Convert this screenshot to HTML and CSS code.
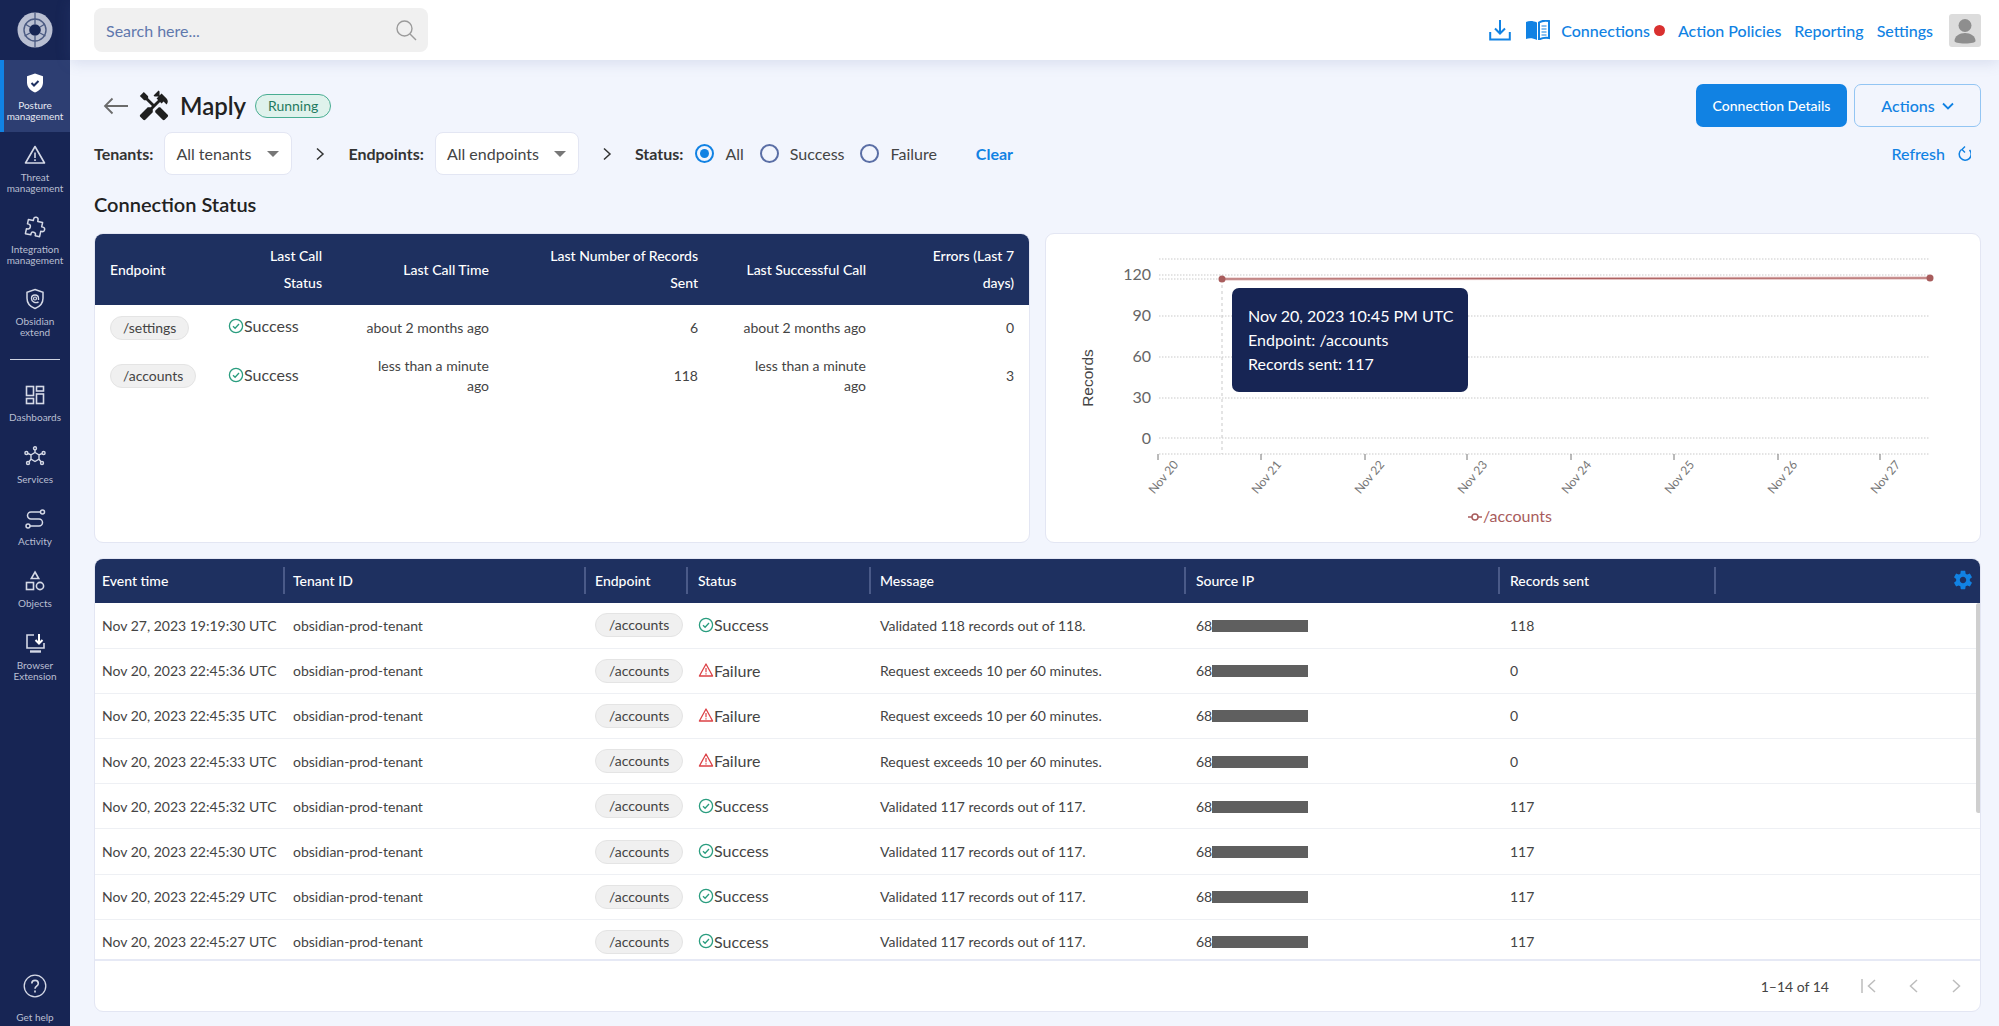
FILE: index.html
```html
<!DOCTYPE html>
<html lang="en">
<head>
<meta charset="utf-8">
<title>Maply - Connection Status</title>
<link rel="stylesheet" href="styles.css">
</head>
<body>
<svg class="defs" width="0" height="0" aria-hidden="true">
  <symbol id="ok" viewBox="0 0 16 16"><circle cx="8" cy="8" r="6.6" fill="none" stroke="#2a9d7f" stroke-width="1.3"/><path d="M5 8.2l2.1 2.1L11 6" fill="none" stroke="#2a9d7f" stroke-width="1.3"/></symbol>
  <symbol id="bad" viewBox="0 0 16 16"><path d="M8 2L14.6 14H1.4z" fill="none" stroke="#dc4146" stroke-width="1.3" stroke-linejoin="round"/><path d="M8 6v4.2M8 11.2v1.2" stroke="#dc4146" stroke-width="1.2"/></symbol>
</svg>
<div class="app">
  <nav class="sidebar">
    <div class="logo">
      <svg width="36" height="36" viewBox="0 0 36 36"><circle cx="18" cy="18" r="17.5" fill="#b9bfd2"/><circle cx="18" cy="18" r="11" fill="none" stroke="#4b5a82" stroke-width="1.4"/><circle cx="18" cy="18" r="5.8" fill="#172554"/><path d="M18 .5V12M18 24v11.500M8 12l5 3M28 12l-5 3M7.500 24l5.500-3M28.500 24L23 21" stroke="#4b5a82" stroke-width="1.3"/></svg>
    </div>
    <a class="nav-item active">
      <svg class="nav-icon" viewBox="0 0 24 24"><path d="M12 2.500l8 2.800v6c0 5-3.300 8.500-8 10.200-4.700-1.700-8-5.200-8-10.200v-6z" fill="#fff"/><path d="M8.500 12l2.500 2.500 4.500-4.500" fill="none" stroke="#1e3060" stroke-width="2"/></svg>
      <span>Posture<br>management</span>
    </a>
    <a class="nav-item">
      <svg class="nav-icon" viewBox="0 0 24 24"><path d="M12 3.500L21.500 20h-19z" fill="none" stroke="#d5d9e6" stroke-width="1.600" stroke-linejoin="round"/><path d="M12 9.500v5.500M12 16.300v1.700" stroke="#d5d9e6" stroke-width="1.600"/></svg>
      <span>Threat<br>management</span>
    </a>
    <a class="nav-item">
      <svg class="nav-icon" viewBox="0 0 24 24"><path d="M9 4.500c0-3 4.500-3 4.500 0V6h5v4.500h1.200c3 0 3 4.500 0 4.500h-1.200v5.500h-4.500v-1.200c0-2.600-4.500-2.600-4.500 0v1.200H4v-5h1.300c2.800 0 2.800-5 0-5H4V6h5z" fill="none" stroke="#d5d9e6" stroke-width="1.500" stroke-linejoin="round" transform="rotate(12 12 12)"/></svg>
      <span>Integration<br>management</span>
    </a>
    <a class="nav-item">
      <svg class="nav-icon" viewBox="0 0 24 24"><path d="M12 2.500l8 2.800v6c0 5-3.300 8.500-8 10.200-4.700-1.700-8-5.200-8-10.200v-6z" fill="none" stroke="#d5d9e6" stroke-width="1.500"/><path d="M15.500 15c-3 1.500-7 .2-7-3.500 0-2.200 1.500-3.500 3.500-3.500s3.500 1.300 3.500 3.500v1.500" fill="none" stroke="#d5d9e6" stroke-width="1.400"/><circle cx="12" cy="11.500" r="1.500" fill="none" stroke="#d5d9e6" stroke-width="1.200"/></svg>
      <span>Obsidian<br>extend</span>
    </a>
    <div class="nav-divider"></div>
    <a class="nav-item single">
      <svg class="nav-icon" viewBox="0 0 24 24" fill="none" stroke="#d5d9e6" stroke-width="1.600"><rect x="3.500" y="3.500" width="7" height="9"/><rect x="13.500" y="3.500" width="7" height="4.500"/><rect x="3.500" y="15.500" width="7" height="5"/><rect x="13.500" y="11" width="7" height="9.500"/></svg>
      <span>Dashboards</span>
    </a>
    <a class="nav-item single">
      <svg class="nav-icon" viewBox="0 0 24 24" fill="none" stroke="#d5d9e6" stroke-width="1.400"><path d="M12 7.500l4 2.300v4.400l-4 2.300-4-2.300V9.800z"/><path d="M12 7.500V4.700M16 9.800l3-1.300M16 14.200l2 2.500M8 14.200l-2 2.500M8 9.800l-3-1.300"/><circle cx="12" cy="3.300" r="1.500"/><circle cx="20.600" cy="8" r="1.500"/><circle cx="19" cy="18" r="1.500"/><circle cx="5" cy="18" r="1.500"/><circle cx="3.400" cy="8" r="1.500"/></svg>
      <span>Services</span>
    </a>
    <a class="nav-item single">
      <svg class="nav-icon" viewBox="0 0 24 24" fill="none" stroke="#d5d9e6" stroke-width="1.500"><path d="M18 5H8a3.500 3.500 0 000 7h8a3.500 3.500 0 010 7H7"/><circle cx="19.500" cy="5" r="2"/><circle cx="5" cy="19" r="2"/></svg>
      <span>Activity</span>
    </a>
    <a class="nav-item single">
      <svg class="nav-icon" viewBox="0 0 24 24" fill="none" stroke="#d5d9e6" stroke-width="1.600"><path d="M12 3l3.700 6.500H8.300z"/><rect x="3.500" y="13.500" width="7" height="7"/><circle cx="17" cy="17" r="3.600"/></svg>
      <span>Objects</span>
    </a>
    <a class="nav-item">
      <svg class="nav-icon" viewBox="0 0 24 24" fill="none" stroke="#d5d9e6" stroke-width="1.600"><path d="M11 4H4v13h17v-5"/><path d="M7 20.500h11" stroke-width="2.400"/><path d="M16 3v9M12.500 9l3.500 3.500L19.500 9" stroke="#fff" stroke-width="2"/></svg>
      <span>Browser<br>Extension</span>
    </a>
    <a class="nav-item help">
      <svg class="help-icon" viewBox="0 0 24 24" fill="none" stroke="#d5d9e6" stroke-width="1.300"><circle cx="12" cy="12" r="10.800"/><path d="M8.800 9.500c0-4.200 6.500-4.200 6.500 0 0 2.600-3.300 2.600-3.300 5.200" stroke-width="1.600"/><path d="M12 16.600v1.800" stroke-width="1.700"/></svg>
      <span>Get help</span>
    </a>
  </nav>

  <div class="content">
    <header class="topbar">
      <div class="search">
        <span>Search here...</span>
        <svg width="22" height="22" viewBox="0 0 22 22" fill="none" stroke="#9b9b9b" stroke-width="1.400"><circle cx="9.500" cy="9.500" r="7.500"/><path d="M15 15l6 6"/></svg>
      </div>
      <div class="top-links">
        <svg class="dl" width="22" height="22" viewBox="0 0 22 22" fill="none" stroke="#1182e3" stroke-width="2"><path d="M11 1v13M6 9.500l5 5 5-5"/><path d="M1.200 13v7.500h19.600V13"/></svg>
        <svg class="book" width="24" height="20" viewBox="0 0 24 20"><path d="M0 2c3-1.500 7-1.500 11 .5V20c-4-2-8-2-11-1z" fill="#1182e3"/><path d="M13 2.500c3-2 7-2 10-1.500v17c-3-.5-7 0-10 1.500z" fill="none" stroke="#1182e3" stroke-width="2"/><path d="M15.500 6h5M15.500 9h5M15.500 12h5M15.500 15h5" stroke="#1182e3" stroke-width="1.200"/></svg>
        <a class="conn">Connections<i class="dot"></i></a>
        <a>Action Policies</a>
        <a>Reporting</a>
        <a>Settings</a>
        <div class="avatar">
          <svg width="32" height="33" viewBox="0 0 32 33"><circle cx="16" cy="11.500" r="6.500" fill="#8e8e8e"/><path d="M5.500 27c0-5 5-8 10.500-8s10.500 3 10.500 8c0 1.500-4 2.500-10.500 2.500S5.500 28.500 5.500 27z" fill="#8e8e8e"/></svg>
        </div>
      </div>
    </header>

    <main class="main">
      <div class="title-row">
        <svg class="back" width="26" height="18" viewBox="0 0 26 18" fill="none" stroke="#6b6b6b" stroke-width="1.800"><path d="M25 9H2M9.500 1.500L2 9l7.500 7.500"/></svg>
        <svg class="tools" width="34" height="34" viewBox="0 0 24 24"><path fill="#1f1f1f" d="M21.670 18.170l-5.300-5.300h-.99l-2.540 2.540v.99l5.300 5.300c.39.39 1.020.39 1.410 0l2.120-2.120c.39-.38.39-1.020 0-1.410zM17.340 10.190l1.410-1.410 2.120 2.120c1.170-1.170 1.170-3.070 0-4.240l-3.540-3.540-1.410 1.410V1.710l-.7-.71-3.540 3.540.71.710h2.830l-1.410 1.410 1.060 1.060-2.890 2.890-4.130-4.130V5.060L4.830 2.040 2 4.870 5.030 7.900h1.410l4.130 4.130-.85.850H7.600l-5.300 5.300c-.39.39-.39 1.020 0 1.410l2.120 2.120c.39.39 1.020.39 1.410 0l5.300-5.300v-2.120l5.150-5.150 1.060 1.050z"/></svg>
        <h1>Maply</h1>
        <span class="pill">Running</span>
        <div class="title-actions">
          <button class="btn primary">Connection Details</button>
          <button class="btn outline">Actions
            <svg width="12" height="8" viewBox="0 0 12 8" fill="none" stroke="#1182e3" stroke-width="1.800"><path d="M1 1.500l5 5 5-5"/></svg>
          </button>
        </div>
      </div>

      <div class="filter-row">
        <label class="f-label">Tenants:</label>
        <div class="select tenants">All tenants<i class="caret"></i></div>
        <svg class="chev" width="10" height="14" viewBox="0 0 10 14" fill="none" stroke="#333" stroke-width="1.500"><path d="M2 1.500L8 7l-6 5.500"/></svg>
        <label class="f-label">Endpoints:</label>
        <div class="select endpoints">All endpoints<i class="caret"></i></div>
        <svg class="chev" width="10" height="14" viewBox="0 0 10 14" fill="none" stroke="#333" stroke-width="1.500"><path d="M2 1.500L8 7l-6 5.500"/></svg>
        <label class="f-label">Status:</label>
        <span class="radio on"></span><span class="r-text r-all">All</span>
        <span class="radio"></span><span class="r-text r-succ">Success</span>
        <span class="radio"></span><span class="r-text r-fail">Failure</span>
        <a class="clear">Clear</a>
        <a class="refresh">Refresh
          <svg width="14" height="16" viewBox="0 0 14 16" fill="none" stroke="#1182e3" stroke-width="1.500"><path d="M4.500 3.500a6 6 0 108 .5"/><path d="M8 .5L5 3.500 8 6.500" stroke-width="1.400"/></svg>
        </a>
      </div>

      <h2>Connection Status</h2>

      <section class="cards">
        <div class="card status-card">
          <table class="tbl-status">
            <colgroup><col class="c1"><col class="c2"><col class="c3"><col class="c4"><col class="c5"><col class="c6"></colgroup>
            <thead>
              <tr><th class="left">Endpoint</th><th>Last Call<br>Status</th><th>Last Call Time</th><th>Last Number of Records<br>Sent</th><th>Last Successful Call</th><th>Errors (Last 7<br>days)</th></tr>
            </thead>
            <tbody>
              <tr class="r1"><td><span class="chip">/settings</span></td><td class="left"><span class="st"><svg class="st-i"><use href="#ok"/></svg>Success</span></td><td>about 2 months ago</td><td>6</td><td>about 2 months ago</td><td>0</td></tr>
              <tr class="r2"><td><span class="chip">/accounts</span></td><td class="left"><span class="st"><svg class="st-i"><use href="#ok"/></svg>Success</span></td><td>less than a minute<br>ago</td><td>118</td><td>less than a minute<br>ago</td><td>3</td></tr>
            </tbody>
          </table>
        </div>
        <div class="card chart-card">
          <svg class="chart" width="934" height="309" viewBox="0 0 934 309">
            <g class="grid">
              <path d="M113 25H884M113 41H884M113 82H884M113 123H884M113 164H884M113 204H884M113 220H884"/>
              <path d="M113 45H176"/>
            </g>
            <path d="M176 45V220" class="cross"/>
            <g class="ticks"><path d="M112 220v6M215 220v6M319 220v6M421 220v6M525 220v6M628 220v6M732 220v6M834 220v6"/></g>
            <path d="M176 45L884 44" stroke="#e3bcbc" stroke-width="3" fill="none"/>
            <path d="M176 45L884 44" stroke="#a85c5c" stroke-width="1" fill="none"/>
            <circle cx="176" cy="45" r="3.500" fill="#a85c5c"/><circle cx="884" cy="44" r="3.500" fill="#a85c5c"/>
            <g class="y-labels">
              <text x="105" y="46">120</text><text x="105" y="87">90</text><text x="105" y="128">60</text><text x="105" y="169">30</text><text x="105" y="210">0</text>
            </g>
            <text class="y-title" transform="translate(47 144) rotate(-90)">Records</text>
            <g class="x-labels">
              <text transform="translate(133 231) rotate(-50)">Nov 20</text>
              <text transform="translate(236 231) rotate(-50)">Nov 21</text>
              <text transform="translate(339 231) rotate(-50)">Nov 22</text>
              <text transform="translate(442 231) rotate(-50)">Nov 23</text>
              <text transform="translate(546 231) rotate(-50)">Nov 24</text>
              <text transform="translate(649 231) rotate(-50)">Nov 25</text>
              <text transform="translate(752 231) rotate(-50)">Nov 26</text>
              <text transform="translate(855 231) rotate(-50)">Nov 27</text>
            </g>
            <path d="M422 283H436" stroke="#a85c5c" stroke-width="1.500"/><circle cx="429" cy="283" r="3" fill="#fff" stroke="#a85c5c" stroke-width="1.500"/>
            <text class="legend" x="437" y="288">/accounts</text>
          </svg>
          <div class="tooltip">Nov 20, 2023 10:45 PM UTC<br>Endpoint: /accounts<br>Records sent: 117</div>
        </div>
      </section>

      <section class="card events">
        <div class="events-scroll">
          <table class="tbl-events">
            <colgroup><col class="e1"><col class="e2"><col class="e3"><col class="e4"><col class="e5"><col class="e6"><col class="e7"><col class="e8"></colgroup>
            <thead>
              <tr><th>Event time</th><th>Tenant ID</th><th>Endpoint</th><th>Status</th><th>Message</th><th>Source IP</th><th>Records sent</th><th class="gear-cell"></th></tr>
            </thead>
            <tbody>
              <tr><td>Nov 27, 2023 19:19:30 UTC</td><td>obsidian-prod-tenant</td><td><span class="chip">/accounts</span></td><td><span class="st"><svg class="st-i"><use href="#ok"/></svg>Success</span></td><td>Validated 118 records out of 118.</td><td>68<i class="redact"></i></td><td>118</td><td></td></tr>
              <tr><td>Nov 20, 2023 22:45:36 UTC</td><td>obsidian-prod-tenant</td><td><span class="chip">/accounts</span></td><td><span class="st"><svg class="st-i"><use href="#bad"/></svg>Failure</span></td><td>Request exceeds 10 per 60 minutes.</td><td>68<i class="redact"></i></td><td>0</td><td></td></tr>
              <tr><td>Nov 20, 2023 22:45:35 UTC</td><td>obsidian-prod-tenant</td><td><span class="chip">/accounts</span></td><td><span class="st"><svg class="st-i"><use href="#bad"/></svg>Failure</span></td><td>Request exceeds 10 per 60 minutes.</td><td>68<i class="redact"></i></td><td>0</td><td></td></tr>
              <tr><td>Nov 20, 2023 22:45:33 UTC</td><td>obsidian-prod-tenant</td><td><span class="chip">/accounts</span></td><td><span class="st"><svg class="st-i"><use href="#bad"/></svg>Failure</span></td><td>Request exceeds 10 per 60 minutes.</td><td>68<i class="redact"></i></td><td>0</td><td></td></tr>
              <tr><td>Nov 20, 2023 22:45:32 UTC</td><td>obsidian-prod-tenant</td><td><span class="chip">/accounts</span></td><td><span class="st"><svg class="st-i"><use href="#ok"/></svg>Success</span></td><td>Validated 117 records out of 117.</td><td>68<i class="redact"></i></td><td>117</td><td></td></tr>
              <tr><td>Nov 20, 2023 22:45:30 UTC</td><td>obsidian-prod-tenant</td><td><span class="chip">/accounts</span></td><td><span class="st"><svg class="st-i"><use href="#ok"/></svg>Success</span></td><td>Validated 117 records out of 117.</td><td>68<i class="redact"></i></td><td>117</td><td></td></tr>
              <tr><td>Nov 20, 2023 22:45:29 UTC</td><td>obsidian-prod-tenant</td><td><span class="chip">/accounts</span></td><td><span class="st"><svg class="st-i"><use href="#ok"/></svg>Success</span></td><td>Validated 117 records out of 117.</td><td>68<i class="redact"></i></td><td>117</td><td></td></tr>
              <tr><td>Nov 20, 2023 22:45:27 UTC</td><td>obsidian-prod-tenant</td><td><span class="chip">/accounts</span></td><td><span class="st"><svg class="st-i"><use href="#ok"/></svg>Success</span></td><td>Validated 117 records out of 117.</td><td>68<i class="redact"></i></td><td>117</td><td></td></tr>
            </tbody>
          </table>
          <svg class="gear" width="22" height="22" viewBox="0 0 24 24"><path fill="#1182e3" d="M19.430 12.980c.04-.32.07-.64.07-.98s-.03-.66-.07-.98l2.110-1.650c.19-.15.24-.42.12-.64l-2-3.460c-.12-.22-.39-.3-.61-.22l-2.490 1c-.52-.4-1.080-.73-1.690-.98l-.38-2.650C14.460 2.180 14.250 2 14 2h-4c-.25 0-.46.180-.49.420l-.38 2.650c-.61.25-1.170.59-1.690.98l-2.490-1c-.23-.09-.49 0-.61.22l-2 3.460c-.13.220-.07.490.12.640l2.110 1.650c-.04.320-.07.650-.07.980s.03.660.07.980l-2.110 1.650c-.19.150-.24.420-.12.640l2 3.460c.12.220.39.300.61.220l2.490-1c.52.400 1.080.730 1.690.980l.38 2.650c.03.240.24.420.49.420h4c.25 0 .46-.180.49-.420l.38-2.650c.61-.250 1.170-.590 1.690-.980l2.490 1c.23.090.49 0 .61-.220l2-3.460c.12-.220.07-.490-.12-.640l-2.110-1.650zM12 15.500c-1.930 0-3.500-1.570-3.500-3.500s1.570-3.500 3.500-3.500 3.500 1.570 3.500 3.500-1.570 3.500-3.500 3.500z"/></svg>
          <div class="thumb"></div>
        </div>
        <footer class="pager">
          <span>1–14 of 14</span>
          <svg class="p-first" width="16" height="14" viewBox="0 0 16 14" fill="none" stroke="#bdbdbd" stroke-width="1.500"><path d="M1 0v14M14 1L7.500 7l6.500 6"/></svg>
          <svg class="p-prev" width="10" height="14" viewBox="0 0 10 14" fill="none" stroke="#bdbdbd" stroke-width="1.500"><path d="M9 1L2.500 7 9 13"/></svg>
          <svg class="p-next" width="10" height="14" viewBox="0 0 10 14" fill="none" stroke="#bdbdbd" stroke-width="1.500"><path d="M1 1l6.500 6L1 13"/></svg>
        </footer>
      </section>
    </main>
  </div>
</div>
</body>
</html>
```

FILE: styles.css
```css
* { box-sizing: border-box; }
html, body { margin: 0; height: 100%; overflow: hidden; }
body { font-family: "Lato", "Liberation Sans", sans-serif; color: #333; background: #f2f5fd; }
.defs { position: absolute; }
.app { display: flex; height: 1026px; }
a { color: inherit; text-decoration: none; }

/* sidebar */
.sidebar { width: 70px; flex: none; background: #172554; display: flex; flex-direction: column; }
.logo { height: 60px; display: flex; align-items: center; justify-content: center; }
.nav-item { height: 72px; display: flex; flex-direction: column; align-items: center; padding-top: 11px; font-size: 10px; line-height: 11px; text-align: center; color: #b9bfd2; white-space: nowrap; }
.nav-item.single { height: 62px; }
.nav-icon { width: 24px; height: 24px; margin-bottom: 5px; flex: none; }
.nav-item.active { background: #2d3e72; border-left: 4px solid #1182e3; padding-right: 4px; color: #e6e9f2; }
.nav-divider { height: 1px; background: #cfd4e2; margin: 11px 10px 12px; flex: none; }
.help { margin-top: auto; height: 52px; padding-top: 0; }
.help-icon { width: 24px; height: 24px; margin-bottom: 14px; flex: none; }

/* top bar */
.content { flex: 1; min-width: 0; display: flex; flex-direction: column; }
.topbar { height: 60px; flex: none; background: #fff; display: flex; align-items: center; padding: 0 18px 0 24px; position: relative; z-index: 1; box-shadow: 0 2px 14px rgba(80, 100, 160, .18); }
.search { width: 334px; height: 44px; background: #f0f0f0; border-radius: 8px; display: flex; align-items: center; justify-content: space-between; padding: 0 11px 0 12px; font-size: 16px; color: #5f78ad; }
.top-links { margin-left: auto; display: flex; align-items: center; font-size: 16px; font-weight: 500; color: #1182e3; }
.dl { margin-right: 15px; }
.book { margin-right: 11px; }
.conn { display: flex; align-items: center; margin-right: 13px; }
.dot { width: 11px; height: 11px; border-radius: 50%; background: #d9302f; margin-left: 4px; }
.top-links > a:nth-of-type(2), .top-links > a:nth-of-type(3) { margin-right: 13px; }
.avatar { width: 32px; height: 33px; background: #dcdcdc; border-radius: 3px; margin-left: 16px; }
.avatar svg { display: block; }

/* main */
.main { flex: 1; min-height: 0; padding: 24px 18px 14px 24px; display: flex; flex-direction: column; }
.title-row { height: 43px; display: flex; align-items: center; flex: none; }
.back { margin-left: 9px; margin-right: 8px; }
.tools { margin-right: 7px; }
h1 { margin: 0 9px 0 2px; font-size: 24px; font-weight: 600; color: #222; }
.pill { height: 24px; width: 76px; border: 1px solid #49ad92; border-radius: 12px; background: #dff2ec; color: #1f7a61; font-size: 14px; display: flex; align-items: center; justify-content: center; }
.title-actions { margin-left: auto; display: flex; gap: 7px; }
.btn { height: 43px; border-radius: 7px; font-family: inherit; font-size: 14px; font-weight: 500; cursor: pointer; }
.primary { width: 151px; background: #1182e3; color: #fff; border: 0; }
.outline { width: 127px; background: transparent; color: #1182e3; border: 1px solid #93c5f3; font-size: 16px; display: flex; align-items: center; justify-content: center; gap: 7px; }

.filter-row { height: 43px; margin-top: 5px; display: flex; align-items: center; flex: none; font-size: 16px; }
.f-label { font-weight: 700; color: #333; }
.select { height: 43px; background: #fff; border: 1px solid #e3e6f3; border-radius: 8px; display: flex; align-items: center; justify-content: space-between; padding: 0 12px 0 11px; color: #444; margin-left: 11px; }
.select.tenants { width: 128px; }
.select.endpoints { width: 144px; }
.caret { width: 0; height: 0; border-left: 6px solid transparent; border-right: 6px solid transparent; border-top: 6px solid #777; }
.chev { margin: 0 23px 0 23px; }
.radio { width: 19px; height: 19px; border-radius: 50%; border: 2px solid #5a6ea5; flex: none; position: relative; }
.radio.on { border-color: #1182e3; margin-left: 12px; }
.radio.on::after { content: ""; position: absolute; inset: 3px; border-radius: 50%; background: #1182e3; }
.r-text { margin-left: 11px; color: #444; }
.r-all { margin-right: 16px; }
.r-succ { margin-right: 15px; }
.r-fail { margin-left: 12px; }
.clear { margin-left: 39px; color: #1182e3; font-weight: 700; }
.refresh { margin-left: auto; margin-right: 10px; color: #1182e3; font-weight: 500; display: flex; align-items: center; gap: 12px; }

h2 { margin: 0; height: 58px; display: flex; align-items: center; font-size: 20px; font-weight: 600; color: #222; flex: none; }

.cards { display: flex; gap: 15px; height: 310px; flex: none; margin-bottom: 15px; }
.card { background: #fff; border: 1px solid #e3e6f3; border-radius: 9px; overflow: hidden; }
.status-card { width: 936px; }
.chart-card { width: 936px; position: relative; }

table { border-collapse: collapse; table-layout: fixed; }
.tbl-status { width: 936px; margin: -1px 0 0 -1px; font-size: 14px; color: #444; }
.c1 { width: 118px; } .c2 { width: 126px; } .c3 { width: 167px; } .c4 { width: 209px; } .c5 { width: 168px; } .c6 { width: 148px; }
.tbl-status th { height: 72px; background: #1e3060; color: #fff; font-weight: 500; font-size: 14px; line-height: 27px; text-align: right; padding: 0 16px; }
.tbl-status th.left { text-align: left; }
.tbl-status td { text-align: right; padding: 0 16px; line-height: 20px; }
.tbl-status td:first-child, .tbl-status td.left { text-align: left; }
.r1 { height: 45px; } .r2 { height: 52px; }
.chip { display: inline-flex; align-items: center; height: 24px; padding: 0 13px; border-radius: 12px; background: #f0f0f0; border: 1px solid #e4e4e4; font-size: 14px; color: #444; line-height: 1; }
.tbl-status .chip { padding: 0 12px; }
.st { display: inline-flex; align-items: center; font-size: 16px; color: #444; }
.st-i { width: 16px; height: 16px; flex: none; }

.chart { display: block; font-family: "Lato", sans-serif; }
.grid path { stroke: #c9c9c9; stroke-width: 1; stroke-dasharray: 1.500 1.500; fill: none; }
.cross { stroke: #c9c9c9; stroke-dasharray: 3 3; fill: none; }
.ticks path { stroke: #777; fill: none; }
.y-labels text { font-size: 16px; fill: #666; text-anchor: end; }
.y-title { font-family: "Liberation Sans", sans-serif; font-size: 15.5px; fill: #444; text-anchor: middle; }
.x-labels text { font-size: 12px; fill: #777; text-anchor: end; }
.legend { font-size: 16px; fill: #a85c5c; }
.tooltip { position: absolute; left: 186px; top: 54px; width: 236px; height: 104px; padding: 16px 16px; background: #172554; color: #fff; border-radius: 7px; font-size: 16px; line-height: 24px; white-space: nowrap; }

.events { height: 454px; flex: none; display: flex; flex-direction: column; }
.events-scroll { height: 401px; position: relative; overflow: hidden; flex: none; margin: -1px -1px 0; }
.tbl-events { width: 1887px; font-size: 14px; color: #444; }
.e1 { width: 191px; } .e2 { width: 301px; } .e3 { width: 102px; } .e4 { width: 183px; } .e5 { width: 315px; } .e6 { width: 314px; } .e7 { width: 216px; } .e8 { width: 265px; }
.tbl-events th { height: 45px; background: #1e3060; color: #fff; font-weight: 500; font-size: 14px; text-align: left; padding: 0 9px; position: relative; }
.tbl-events th:not(:last-child)::after { content: ""; position: absolute; right: 0; top: 9px; bottom: 9px; width: 2px; background: #4a5a88; }
.tbl-events td { height: 45.2px; padding: 0 9px; border-bottom: 1px solid #eef0f4; white-space: nowrap; }
.tbl-events th:nth-child(-n+2), .tbl-events td:nth-child(-n+2) { padding-left: 8px; }
.tbl-events th:nth-child(4), .tbl-events td:nth-child(4), .tbl-events th:nth-child(6), .tbl-events td:nth-child(6), .tbl-events th:nth-child(7), .tbl-events td:nth-child(7) { padding-left: 10px; }
.redact { display: inline-block; width: 96px; height: 12px; background: #5f5f5f; vertical-align: -1px; }
.gear { position: absolute; right: 7px; top: 11px; }
.thumb { position: absolute; right: 0; top: 45px; width: 5px; height: 210px; background: #cfcfcf; border-radius: 3px; }

.pager { height: 53px; border-top: 2px solid #e6e9f5; display: flex; align-items: center; justify-content: flex-end; font-size: 14px; color: #444; padding-right: 18px; }
.p-first { margin-left: 32px; }
.p-prev { margin-left: 31px; }
.p-next { margin-left: 34px; }
```
